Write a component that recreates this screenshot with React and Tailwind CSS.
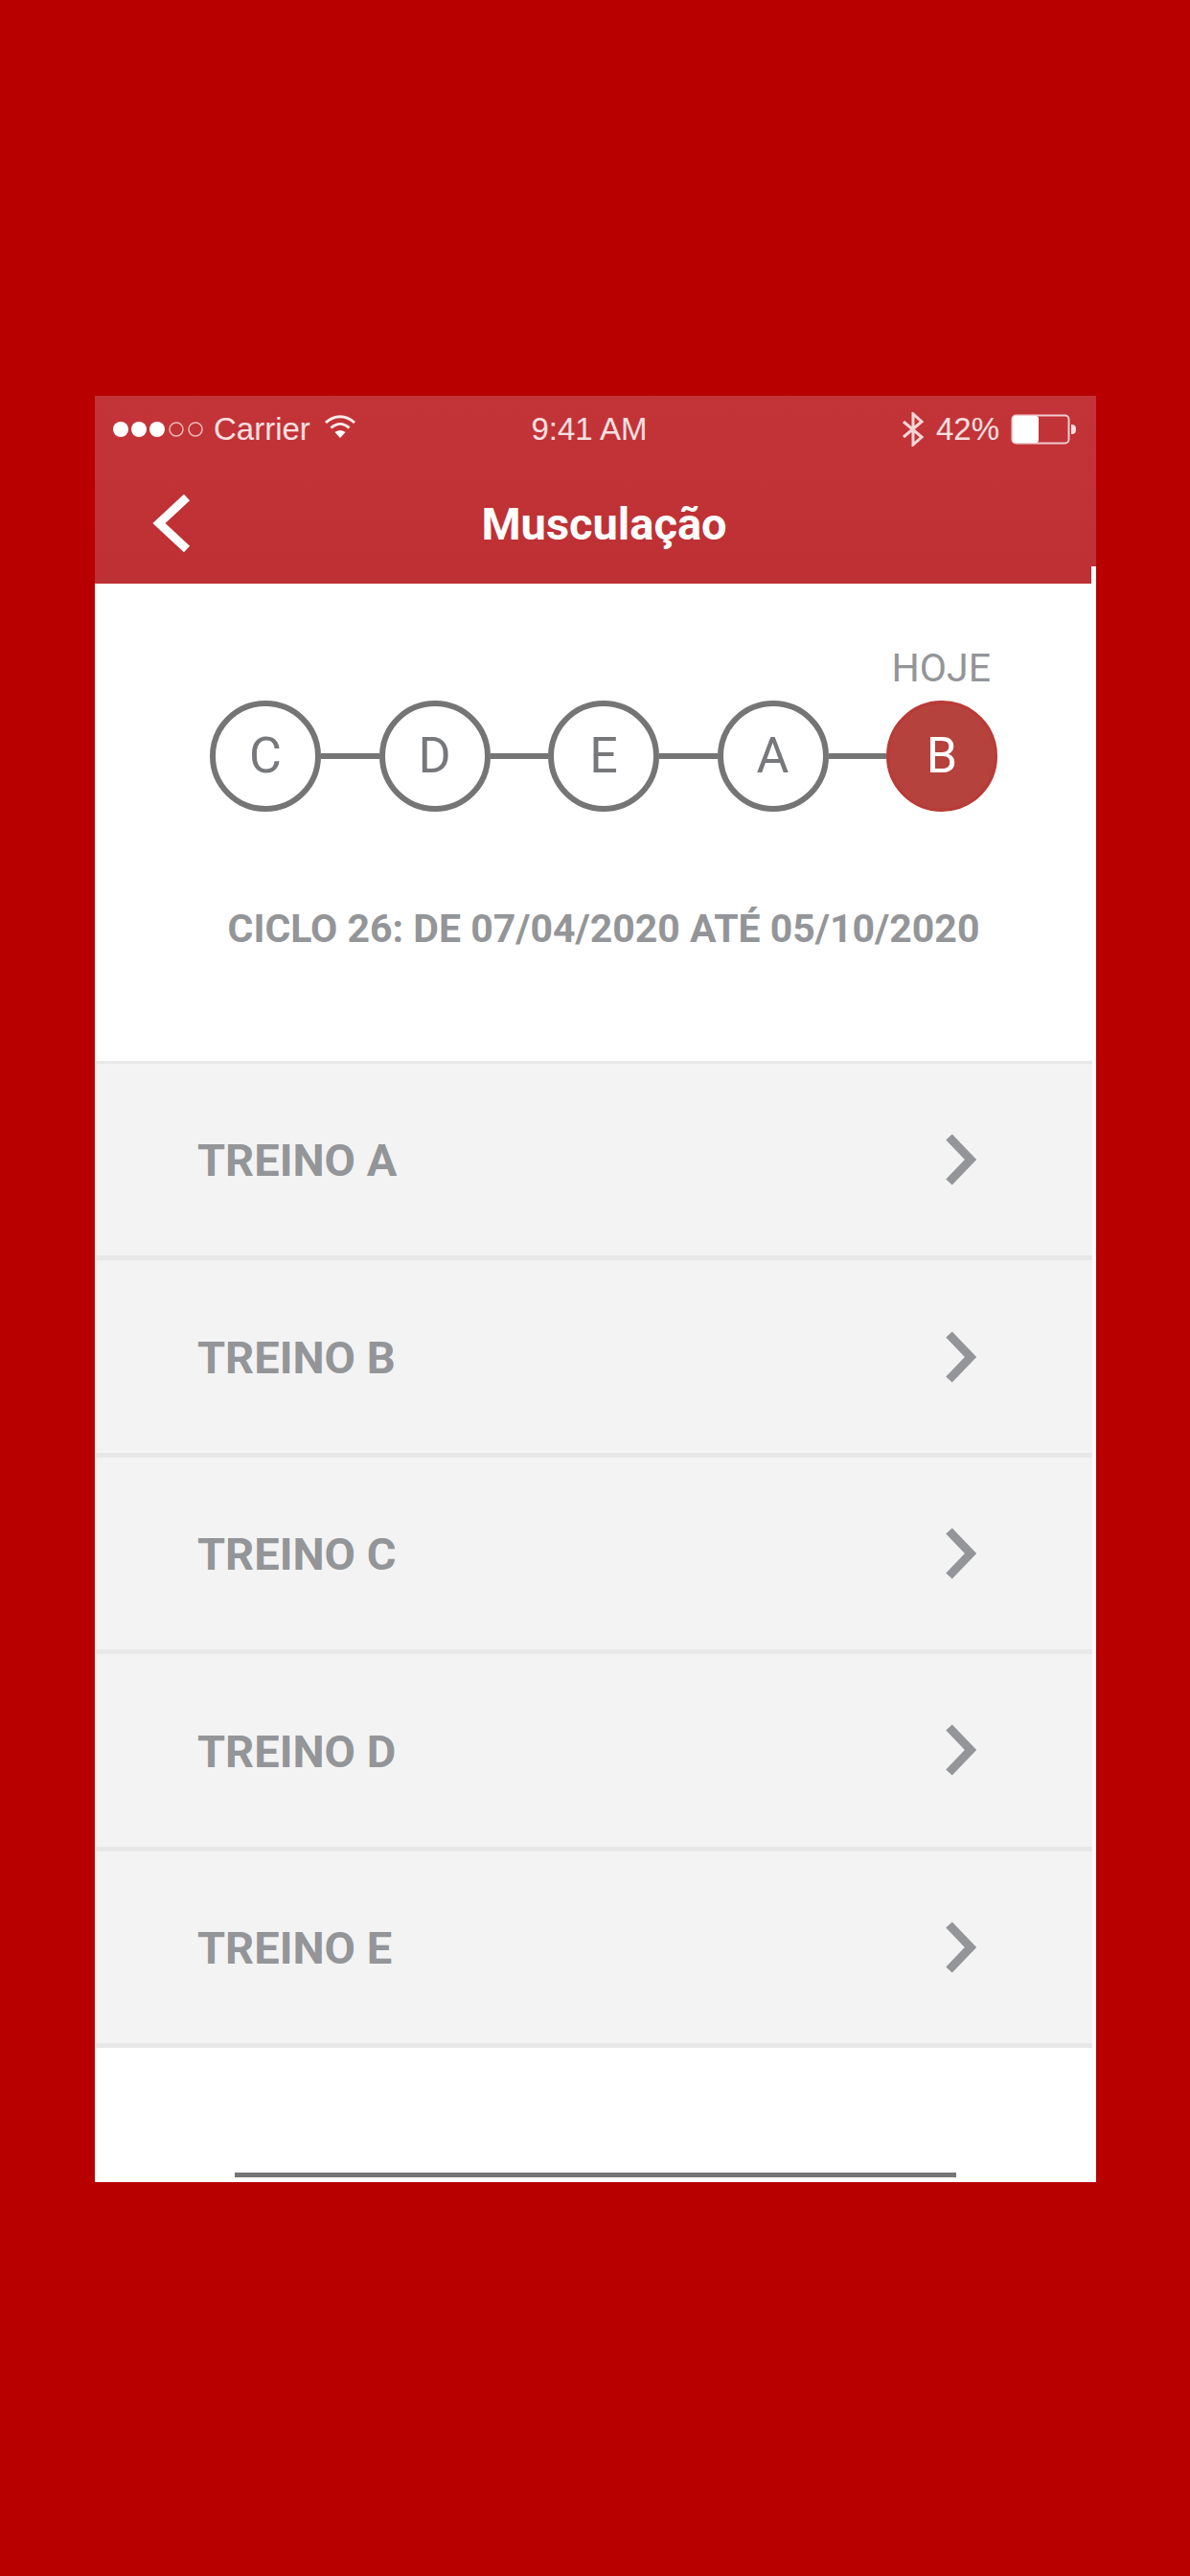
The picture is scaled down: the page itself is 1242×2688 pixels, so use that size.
const cycle = ['C', 'D', 'E', 'A', 'B']
const treinos = ['TREINO A', 'TREINO B', 'TREINO C', 'TREINO D', 'TREINO E']

function Signal() {
    return (
        <svg width="97" height="20" viewBox="0 0 97 20">
            <circle cx="9" cy="10" r="8" fill="#fff" />
            <circle cx="28" cy="10" r="8" fill="#fff" />
            <circle cx="47" cy="10" r="8" fill="#fff" />
            <circle cx="67" cy="10" r="7" fill="none" stroke="#fff" strokeOpacity="0.65" strokeWidth="1.500" />
            <circle cx="87" cy="10" r="7" fill="none" stroke="#fff" strokeOpacity="0.65" strokeWidth="1.500" />
        </svg>
    )
}

function Wifi() {
    return (
        <svg width="34" height="26" viewBox="0 0 34 26" fill="none" stroke="#fff" strokeOpacity="0.9" strokeWidth="3">
            <path d="M2 9c9-8.500 21-8.500 30 0" />
            <path d="M7.500 14.500c6-5.500 13-5.500 19 0" />
            <path d="M17 25l-5.500-6c3-2.500 8-2.500 11 0z" fill="#fff" stroke="none" />
        </svg>
    )
}

function Bluetooth() {
    return (
        <svg width="24" height="36" viewBox="0 0 24 36" fill="none" stroke="#fff" strokeOpacity="0.8" strokeWidth="3">
            <path d="M2 10l19 16-9 8V2l9 8L2 26" />
        </svg>
    )
}

function Battery() {
    return (
        <svg width="69" height="32" viewBox="0 0 69 32">
            <rect x="1.500" y="1.500" width="59" height="29" rx="4" fill="none" stroke="#fff" strokeOpacity="0.75" strokeWidth="2" />
            <rect x="2" y="2" width="27" height="28" rx="3" fill="#fff" />
            <path d="M63 11c4 0 5 2 5 5s-1 5-5 5z" fill="#fff" fillOpacity="0.85" />
        </svg>
    )
}

function RowChevron() {
    return (
        <svg width="32" height="54" viewBox="0 0 32 54" fill="none" stroke="#939598" strokeWidth="9">
            <path d="M3.500 3.500L26 27 3.500 50.500" />
        </svg>
    )
}

export default function App() {
    return (
        <div className="w-[1242px] h-[2688px] bg-[#b90000] pt-[413px] pl-[99px] font-['Roboto',sans-serif]">
            <div className="w-[1045px] h-[1864px] bg-white flex flex-col">
                {/* Status bar + nav */}
                <div className="h-[196px] bg-linear-to-b from-[#c33438] to-[#bd3033] shrink-0">
                    <div className="h-[70px] pl-[18px] pr-[20px] flex items-center justify-between text-[33px] text-white/85 font-['Liberation_Sans',sans-serif]">
                        <div className="w-[330px] flex items-center">
                            <Signal />
                            <span className="ml-[9px]">Carrier</span>
                            <span className="ml-[14px] mb-[6px]"><Wifi /></span>
                        </div>
                        <span>9:41 AM</span>
                        <div className="w-[341px] flex items-center justify-end gap-[12px]">
                            <Bluetooth />
                            <span>42%</span>
                            <Battery />
                        </div>
                    </div>
                    <div className="h-[126px] pl-[60px] flex items-center relative">
                        <svg width="42" height="62" viewBox="0 0 42 62" fill="none" stroke="#fff" strokeWidth="9">
                            <path d="M36 4L7 31l29 27" />
                        </svg>
                        <h1 className="absolute inset-x-0 pl-[18px] text-center text-[47px] leading-none font-bold text-white">Musculação</h1>
                    </div>
                </div>

                <div className="w-[1040px] ml-[1px] flex flex-col flex-1">
                    <div className="h-[18px] -mt-[18px] ml-[1039px] w-[5px] bg-white shrink-0" />
                    <div className="h-[498px] bg-white shrink-0 flex flex-col">
                        {/* Cycle tracker */}
                        <div className="pt-[66px] pr-[106px] flex justify-end text-[41px] leading-[44px] text-[#939598]">HOJE</div>
                        <div className="mt-[12px] ml-[119px] flex items-center">
                            {cycle.map((letter, index) => (
                                <div key={letter} className="flex items-center">
                                    {index > 0 && <div className="w-[60.500px] h-[6px] bg-[#757575]" />}
                                    <div
                                        className={
                                            letter === 'B'
                                                ? 'w-[116px] h-[116px] rounded-full bg-[#b5423c] border-[3px] border-[#b93a36] flex items-center justify-center text-[52px] text-white'
                                                : 'w-[116px] h-[116px] rounded-full bg-white border-[6px] border-[#757575] flex items-center justify-center text-[52px] text-[#77787b]'
                                        }
                                    >
                                        {letter}
                                    </div>
                                </div>
                            ))}
                        </div>
                        <p className="mt-[98px] text-center text-[41px] leading-[48px] font-bold text-[#939598] pl-[20px]">
                            CICLO 26: DE 07/04/2020 ATÉ 05/10/2020
                        </p>
                    </div>

                    {/* Treinos */}
                    <div className="border-t-[3px] border-[#e8e8e8]">
                        {treinos.map((treino) => (
                            <div
                                key={treino}
                                className="h-[205.400px] bg-[#f3f3f3] border-b-[5px] border-[#e8e8e8] pl-[106px] pr-[121px] flex items-center justify-between"
                            >
                                <span className="mt-[3px] text-[47px] font-bold text-[#939598]">{treino}</span>
                                <RowChevron />
                            </div>
                        ))}
                    </div>
                </div>

                <div className="h-[5px] w-[753px] ml-[146px] mb-[5px] bg-[#757575] shrink-0" />
            </div>
        </div>
    )
}
